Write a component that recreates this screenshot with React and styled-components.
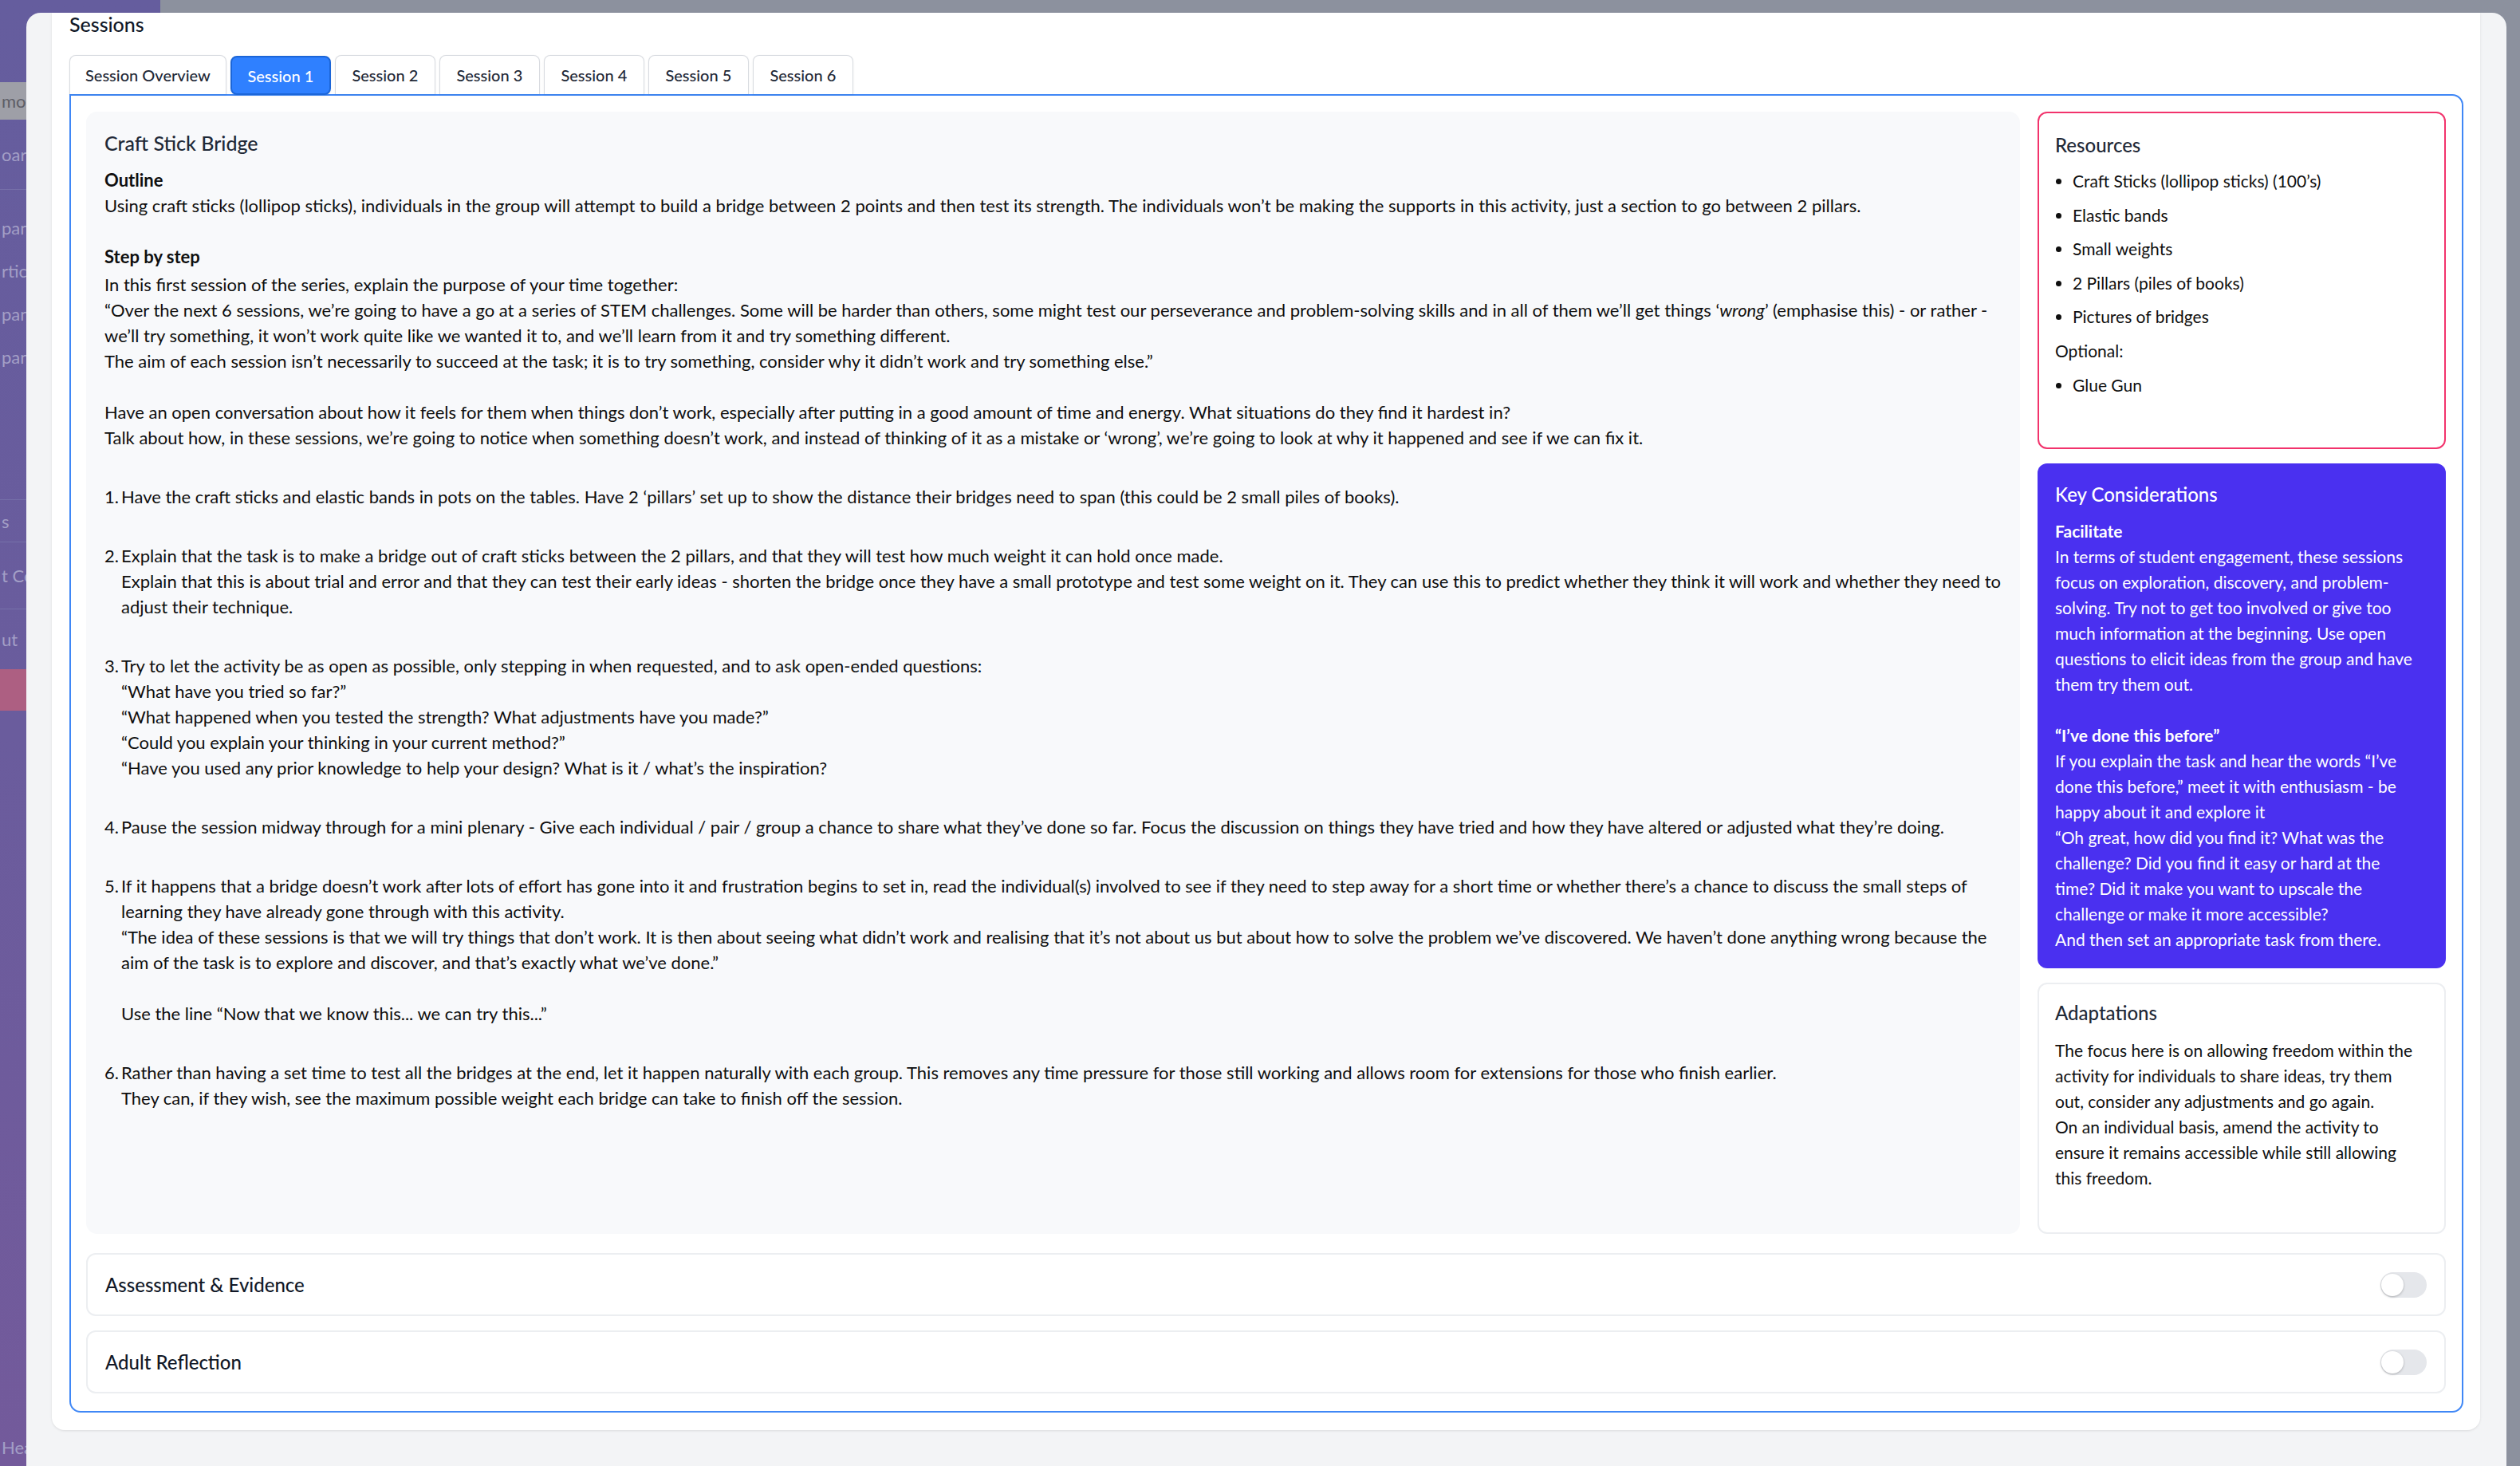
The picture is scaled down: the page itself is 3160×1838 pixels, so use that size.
import React from "react";
import styled, { createGlobalStyle } from "styled-components";

const GlobalStyle = createGlobalStyle`
  html, body {
    margin: 0;
    padding: 0;
  }
  body {
    font-family: "Lato", "Noto Sans", sans-serif;
    background: #8c919e;
    overflow: hidden;
  }
  * {
    box-sizing: border-box;
  }
`;

const tabs = ["Session Overview", "Session 1", "Session 2", "Session 3", "Session 4", "Session 5", "Session 6"];

const sideItems = [
  { h: 103 },
  { h: 47, text: "mo T", tone: "grey" },
  { h: 88, text: "oard", divider: true },
  { h: 20 },
  { h: 54, text: "pant" },
  { h: 54, text: "rticip" },
  { h: 54, text: "pant" },
  { h: 54, text: "pant" },
  { h: 153, divider: true },
  { h: 53, text: "s", divider: true },
  { h: 84, text: "t Ce", divider: true },
  { h: 75, text: "ut" },
  { h: 52, tone: "red" },
  { h: 908 },
  { h: 30, text: "Hea" },
];

const steps = [
  {
    num: "1.",
    lines: [
      "Have the craft sticks and elastic bands in pots on the tables. Have 2 ‘pillars’ set up to show the distance their bridges need to span (this could be 2 small piles of books).",
    ],
  },
  {
    num: "2.",
    lines: [
      "Explain that the task is to make a bridge out of craft sticks between the 2 pillars, and that they will test how much weight it can hold once made.",
      "Explain that this is about trial and error and that they can test their early ideas - shorten the bridge once they have a small prototype and test some weight on it. They can use this to predict whether they think it will work and whether they need to",
      "adjust their technique.",
    ],
  },
  {
    num: "3.",
    lines: [
      "Try to let the activity be as open as possible, only stepping in when requested, and to ask open-ended questions:",
      "“What have you tried so far?”",
      "“What happened when you tested the strength? What adjustments have you made?”",
      "“Could you explain your thinking in your current method?”",
      "“Have you used any prior knowledge to help your design? What is it / what’s the inspiration?",
    ],
  },
  {
    num: "4.",
    lines: [
      "Pause the session midway through for a mini plenary - Give each individual / pair / group a chance to share what they’ve done so far. Focus the discussion on things they have tried and how they have altered or adjusted what they’re doing.",
    ],
  },
  {
    num: "5.",
    lines: [
      "If it happens that a bridge doesn’t work after lots of effort has gone into it and frustration begins to set in, read the individual(s) involved to see if they need to step away for a short time or whether there’s a chance to discuss the small steps of",
      "learning they have already gone through with this activity.",
      "“The idea of these sessions is that we will try things that don’t work. It is then about seeing what didn’t work and realising that it’s not about us but about how to solve the problem we’ve discovered. We haven’t done anything wrong because the",
      "aim of the task is to explore and discover, and that’s exactly what we’ve done.”",
      "",
      "Use the line “Now that we know this... we can try this...”",
    ],
  },
  {
    num: "6.",
    lines: [
      "Rather than having a set time to test all the bridges at the end, let it happen naturally with each group. This removes any time pressure for those still working and allows room for extensions for those who finish earlier.",
      "They can, if they wish, see the maximum possible weight each bridge can take to finish off the session.",
    ],
  },
];

const resources = [
  "Craft Sticks (lollipop sticks) (100’s)",
  "Elastic bands",
  "Small weights",
  "2 Pillars (piles of books)",
  "Pictures of bridges",
];

const facilitateLines = [
  "In terms of student engagement, these sessions",
  "focus on exploration, discovery, and problem-",
  "solving. Try not to get too involved or give too",
  "much information at the beginning. Use open",
  "questions to elicit ideas from the group and have",
  "them try them out.",
];

const doneBeforeLines = [
  "If you explain the task and hear the words “I’ve",
  "done this before,” meet it with enthusiasm - be",
  "happy about it and explore it",
  "“Oh great, how did you find it? What was the",
  "challenge? Did you find it easy or hard at the",
  "time? Did it make you want to upscale the",
  "challenge or make it more accessible?",
  "And then set an appropriate task from there.",
];

const adaptationLines = [
  "The focus here is on allowing freedom within the",
  "activity for individuals to share ideas, try them",
  "out, consider any adjustments and go again.",
  "On an individual basis, amend the activity to",
  "ensure it remains accessible while still allowing",
  "this freedom.",
];

const Lines = ({ items }) =>
  items.map((line, i) => <Line key={i}>{line || "\u00a0"}</Line>);

const App = () => {
  return (
    <>
      <GlobalStyle />
      <Page>
        <Sidebar>
          {sideItems.map((item, i) => (
            <SideItem key={i} $h={item.h} $tone={item.tone} $divider={item.divider}>
              {item.text}
            </SideItem>
          ))}
        </Sidebar>
        <Main />

        <Modal>
          <Card>
            <Heading>Sessions</Heading>
            <TabBar>
              {tabs.map((t) => (
                <Tab key={t} $active={t === "Session 1"}>
                  {t}
                </Tab>
              ))}
            </TabBar>

            <TabPanel>
              <TopGrid>
                <LessonPanel>
                  <LessonTitle>Craft Stick Bridge</LessonTitle>
                  <SubHead>Outline</SubHead>
                  <Line>
                    Using craft sticks (lollipop sticks), individuals in the group will attempt to build a bridge between 2 points and then test its strength. The individuals won’t be making the supports in this activity, just a section to go between 2 pillars.
                  </Line>
                  <Line>{"\u00a0"}</Line>
                  <SubHead>Step by step</SubHead>
                  <Section>
                    <Line>In this first session of the series, explain the purpose of your time together:</Line>
                    <Line>
                      “Over the next 6 sessions, we’re going to have a go at a series of STEM challenges. Some will be harder than others, some might test our perseverance and problem-solving skills and in all of them we’ll get things ‘<em>wrong</em>’ (emphasise this) - or rather -
                    </Line>
                    <Line>we’ll try something, it won’t work quite like we wanted it to, and we’ll learn from it and try something different.</Line>
                    <Line>The aim of each session isn’t necessarily to succeed at the task; it is to try something, consider why it didn’t work and try something else.”</Line>
                    <Line>{"\u00a0"}</Line>
                    <Line>Have an open conversation about how it feels for them when things don’t work, especially after putting in a good amount of time and energy. What situations do they find it hardest in?</Line>
                    <Line>Talk about how, in these sessions, we’re going to notice when something doesn’t work, and instead of thinking of it as a mistake or ‘wrong’, we’re going to look at why it happened and see if we can fix it.</Line>
                  </Section>

                  {steps.map((s) => (
                    <StepRow key={s.num}>
                      <StepNum>{s.num}</StepNum>
                      <div>
                        <Lines items={s.lines} />
                      </div>
                    </StepRow>
                  ))}
                </LessonPanel>

                <SideColumn>
                  <ResourceCard>
                    <CardTitle>Resources</CardTitle>
                    <ResourceList>
                      {resources.map((r) => (
                        <li key={r}>{r}</li>
                      ))}
                    </ResourceList>
                    <ResourceNote>Optional:</ResourceNote>
                    <ResourceList>
                      <li>Glue Gun</li>
                    </ResourceList>
                  </ResourceCard>

                  <KeyCard>
                    <CardTitle $light>Key Considerations</CardTitle>
                    <BoldLine>Facilitate</BoldLine>
                    <Lines items={facilitateLines} />
                    <Line>{"\u00a0"}</Line>
                    <BoldLine>“I’ve done this before”</BoldLine>
                    <Lines items={doneBeforeLines} />
                  </KeyCard>

                  <AdaptCard>
                    <CardTitle>Adaptations</CardTitle>
                    <AdaptBody>
                      <Lines items={adaptationLines} />
                    </AdaptBody>
                  </AdaptCard>
                </SideColumn>
              </TopGrid>

              <CollapsibleStack>
                <Collapsible>
                  <CollapsibleTitle>Assessment &amp; Evidence</CollapsibleTitle>
                  <Toggle />
                </Collapsible>
                <Collapsible>
                  <CollapsibleTitle>Adult Reflection</CollapsibleTitle>
                  <Toggle />
                </Collapsible>
              </CollapsibleStack>
            </TabPanel>
          </Card>
        </Modal>
      </Page>
    </>
  );
};

const Page = styled.div`
  position: relative;
  width: 3160px;
  height: 1838px;
  display: grid;
  grid-template-columns: 201px 1fr;
  overflow: hidden;
`;

const Sidebar = styled.aside`
  background: linear-gradient(180deg, #655d9e 0%, #6a5c9d 50%, #735a9b 100%);
  display: flex;
  flex-direction: column;
`;

const SideItem = styled.div`
  height: ${(p) => p.$h}px;
  flex-shrink: 0;
  display: flex;
  align-items: center;
  padding-left: 2px;
  font-size: 22px;
  white-space: nowrap;
  color: ${(p) => (p.$tone === "grey" ? "#5d5d66" : "#a39fc6")};
  background: ${(p) =>
    p.$tone === "grey" ? "#9e9fa7" : p.$tone === "red" ? "#ad5f82" : "transparent"};
  border-bottom: ${(p) => (p.$divider ? "1px solid #7670a9" : "none")};
`;

const Main = styled.div`
  background: #8c919e;
`;

const Modal = styled.div`
  position: absolute;
  left: 33px;
  top: 16px;
  right: 17px;
  bottom: 0;
  background: #f3f4f6;
  border-radius: 18px 18px 0 0;
  padding: 0 33px 0 32px;
`;

const Card = styled.section`
  background: #ffffff;
  border-radius: 0 0 16px 16px;
  box-shadow: 0 1px 3px rgba(0, 0, 0, 0.1);
  padding: 0 21px 22px 22px;
`;

const Heading = styled.h2`
  margin: 0;
  font-size: 25px;
  line-height: 28px;
  font-weight: 500;
  color: #111827;
`;

const TabBar = styled.div`
  display: flex;
  gap: 5px;
  margin-top: 25px;
  align-items: flex-end;
`;

const Tab = styled.button`
  height: 49px;
  min-width: 126px;
  padding: 0 19px;
  font-family: inherit;
  font-size: 20px;
  font-weight: 500;
  color: ${(p) => (p.$active ? "#ffffff" : "#1f2937")};
  background: ${(p) => (p.$active ? "#2f80ff" : "#ffffff")};
  border: ${(p) => (p.$active ? "2px solid #1c66d8" : "1px solid #d8dbe0")};
  border-bottom: ${(p) => (p.$active ? "2px solid #1c66d8" : "none")};
  border-radius: ${(p) => (p.$active ? "8px" : "8px 8px 0 0")};
  box-shadow: 0 1px 3px rgba(0, 0, 0, 0.06);
  margin-bottom: ${(p) => (p.$active ? "-1px" : "0")};
  position: relative;
  z-index: 1;
  cursor: pointer;
`;

const TabPanel = styled.div`
  border: 2px solid #3f87f6;
  border-radius: 0 14px 14px 14px;
  padding: 20px 20px 22px 19px;
`;

const TopGrid = styled.div`
  display: grid;
  grid-template-columns: minmax(0, 1fr) 512px;
  gap: 22px;
`;

const LessonPanel = styled.div`
  min-width: 0;
  background: #f8f9fb;
  border-radius: 14px;
  padding: 23px;
  font-size: 22px;
  line-height: 32px;
  color: #0f0f0f;
`;

const LessonTitle = styled.h3`
  margin: 0 0 15px;
  font-size: 25px;
  line-height: 32px;
  font-weight: 500;
  color: #1f2937;
`;

const SubHead = styled.div`
  font-weight: 700;
  color: #0f0f0f;
`;

const Section = styled.div`
  margin-top: 3px;
`;

const Line = styled.div`
  white-space: nowrap;
`;

const StepRow = styled.div`
  display: flex;
  margin-top: 42px;
`;

const StepNum = styled.span`
  width: 21px;
  flex-shrink: 0;
`;

const SideColumn = styled.div`
  display: flex;
  flex-direction: column;
  gap: 18px;
`;

const CardTitle = styled.h4`
  margin: 0;
  font-size: 24px;
  line-height: 32px;
  font-weight: 500;
  color: ${(p) => (p.$light ? "#ffffff" : "#1f2937")};
`;

const ResourceCard = styled.div`
  min-height: 423px;
  border: 2px solid #f2336c;
  border-radius: 12px;
  padding: 24px 20px 20px;
  font-size: 21px;
  color: #0f0f0f;
  h4 {
    margin-bottom: 8px;
  }
`;

const ResourceList = styled.ul`
  margin: 0;
  padding-left: 22px;
  line-height: 42.6px;
`;

const ResourceNote = styled.div`
  line-height: 42.6px;
`;

const KeyCard = styled.div`
  background: #4a30f0;
  border-radius: 12px;
  padding: 23px 22px 20px;
  font-size: 21px;
  line-height: 32px;
  color: #ffffff;
  h4 {
    margin-bottom: 14px;
  }
`;

const BoldLine = styled.div`
  font-weight: 700;
`;

const AdaptCard = styled.div`
  flex: 1;
  min-height: 315px;
  border: 2px solid #eceef1;
  border-radius: 12px;
  padding: 20px 20px;
  font-size: 21px;
  line-height: 32px;
  color: #0f0f0f;
`;

const AdaptBody = styled.div`
  margin-top: 15px;
`;

const CollapsibleStack = styled.div`
  display: flex;
  flex-direction: column;
  gap: 18px;
  margin-top: 24px;
`;

const Collapsible = styled.div`
  display: flex;
  align-items: center;
  justify-content: space-between;
  height: 79px;
  padding: 0 22px 0 22px;
  border: 2px solid #eceef1;
  border-radius: 12px;
  background: #ffffff;
`;

const CollapsibleTitle = styled.span`
  font-size: 24px;
  font-weight: 500;
  color: #111827;
`;

const Toggle = styled.span`
  position: relative;
  width: 58px;
  height: 32px;
  border-radius: 16px;
  background: #e5e7eb;
  &::after {
    content: "";
    position: absolute;
    left: 1px;
    top: 2px;
    width: 28px;
    height: 28px;
    border-radius: 50%;
    background: #ffffff;
    box-shadow: 0 1px 3px rgba(0, 0, 0, 0.25);
  }
`;

export default App;
